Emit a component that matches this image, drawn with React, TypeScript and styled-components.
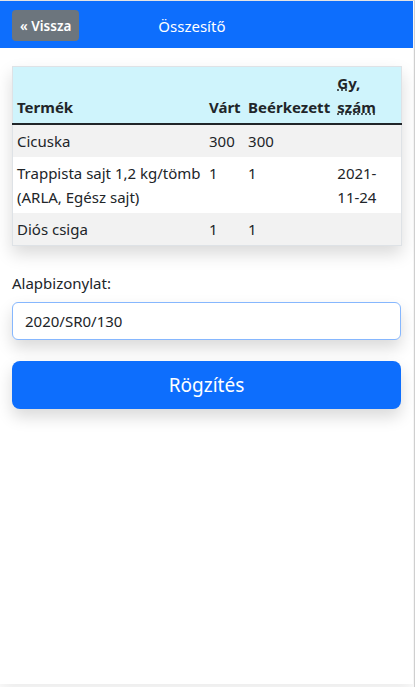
import React, { useEffect, useRef } from 'react';
import styled, { createGlobalStyle } from 'styled-components';

const GlobalStyle = createGlobalStyle`
  * { box-sizing: border-box; }
  body {
    margin: 0;
    background: #fff;
    font-family: 'Noto Sans', 'Open Sans', sans-serif;
    font-size: 15px;
    line-height: 24px;
    color: #212529;
  }
`;

const Frame = styled.div`
  width: 415px;
  height: 687px;
  border-top: 1px solid #e4e4e4;
  border-right: 1px solid #cfcfcf;
  overflow: hidden;
`;

const Page = styled.div`
  width: 413px;
  height: 683px;
  background: #fff;
  box-shadow: 0 0.5rem 1rem rgba(0, 0, 0, 0.08);
`;

const TopBar = styled.header`
  display: flex;
  align-items: flex-start;
  height: 47px;
  padding: 9px 12px 0;
  background: #0d6efd;
`;

const BackButton = styled.button`
  display: inline-flex;
  align-items: center;
  gap: 4px;
  height: 31px;
  padding: 0 8px;
  border: 0;
  border-radius: 4px;
  background: #6c757d;
  color: #fff;
  font-family: inherit;
  font-size: 13.5px;
  font-weight: 600;
`;

const Title = styled.h1`
  margin: 4px 0 0 79px;
  font-size: 15px;
  font-weight: 400;
  line-height: 24px;
  color: #fff;
`;

const Content = styled.main`
  padding: 18px 12px 0;
`;

const Table = styled.table`
  width: 390px;
  border-collapse: collapse;
  table-layout: fixed;
  border: 1px solid #dee2e6;
  box-shadow: 0 0.5rem 1rem rgba(0, 0, 0, 0.15);
`;

const HeadCell = styled.th<{ $w: number }>`
  width: ${(p) => p.$w}px;
  padding: 4px;
  text-align: left;
  vertical-align: bottom;
  font-weight: 700;
  background: #cff4fc;
  border-bottom: 2px solid #212529;
`;

const Abbr = styled.abbr`
  text-decoration: underline dotted;
  cursor: help;
`;

const Row = styled.tr<{ $striped: boolean }>`
  background: ${(p) => (p.$striped ? '#f2f2f2' : '#fff')};
  & + & td {
    border-top: 1px solid #dee2e6;
  }
`;

const Cell = styled.td`
  padding: 4px;
  vertical-align: top;
`;

const Label = styled.label`
  display: block;
  margin: 25px 0 7px;
`;

const Input = styled.input`
  display: block;
  width: 100%;
  height: 38px;
  padding: 6px 12px;
  border: 1px solid #86b7fe;
  border-radius: 6px;
  font-family: inherit;
  font-size: 15px;
  color: #212529;
  caret-color: #000;
  outline: none;
  box-shadow: 0 0.5rem 1rem rgba(0, 0, 0, 0.15);
`;

const SubmitButton = styled.button`
  display: block;
  width: 100%;
  height: 48px;
  margin-top: 21px;
  border: 0;
  border-radius: 8px;
  background: #0d6efd;
  color: #fff;
  font-family: inherit;
  font-size: 19px;
  box-shadow: 0 0.5rem 1rem rgba(0, 0, 0, 0.15);
`;

const rows = [
  { name: 'Cicuska', expected: '300', received: '300', date: '' },
  { name: 'Trappista sajt 1,2 kg/tömb (ARLA, Egész sajt)', expected: '1', received: '1', date: '2021-11-24' },
  { name: 'Diós csiga', expected: '1', received: '1', date: '' },
];

export default function App() {
  const inputRef = useRef<HTMLInputElement>(null);

  useEffect(() => {
    const el = inputRef.current;
    if (el) {
      el.focus();
      el.setSelectionRange(el.value.length, el.value.length);
    }
  }, []);

  return (
    <Frame>
      <GlobalStyle />
      <Page>
        <TopBar>
          <BackButton>« Vissza</BackButton>
          <Title>Összesítő</Title>
        </TopBar>
        <Content>
          <Table>
            <thead>
              <tr>
                <HeadCell $w={192}>Termék</HeadCell>
                <HeadCell $w={39}>Várt</HeadCell>
                <HeadCell $w={89}>Beérkezett</HeadCell>
                <HeadCell $w={68}>
                  <Abbr title="Gyártási szám">Gy, szám</Abbr>
                </HeadCell>
              </tr>
            </thead>
            <tbody>
              {rows.map((r, i) => (
                <Row key={i} $striped={i % 2 === 0}>
                  <Cell>{r.name}</Cell>
                  <Cell>{r.expected}</Cell>
                  <Cell>{r.received}</Cell>
                  <Cell>{r.date}</Cell>
                </Row>
              ))}
            </tbody>
          </Table>
          <Label htmlFor="alap">Alapbizonylat:</Label>
          <Input id="alap" ref={inputRef} defaultValue="2020/SR0/130" />
          <SubmitButton>Rögzítés</SubmitButton>
        </Content>
      </Page>
    </Frame>
  );
}
